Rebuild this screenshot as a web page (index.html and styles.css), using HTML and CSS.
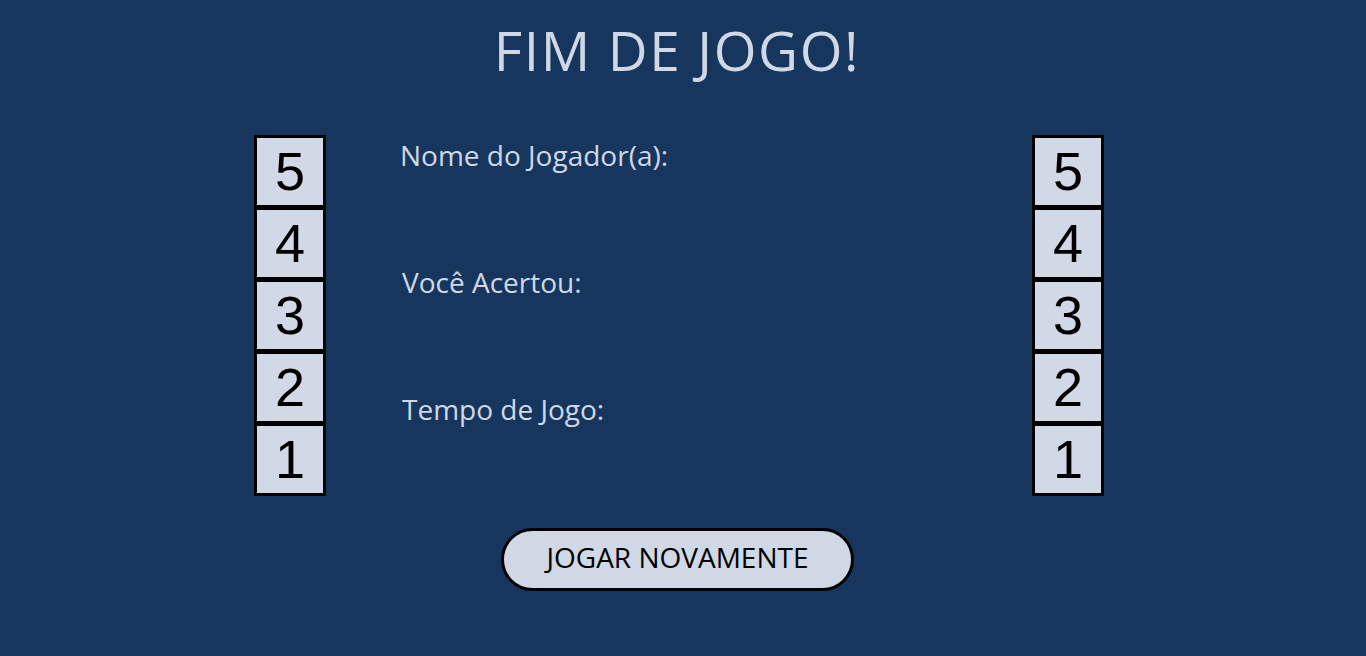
FILE: index.html
```html
<!DOCTYPE html>
<html lang="pt">
<head>
<meta charset="utf-8">
<title>Fim de Jogo</title>
<link rel="stylesheet" href="styles.css">
</head>
<body>
<div class="page">
  <h1 class="title">FIM DE JOGO!</h1>
  <div class="main">
    <div class="stack">
      <div class="box">5</div>
      <div class="box">4</div>
      <div class="box">3</div>
      <div class="box">2</div>
      <div class="box">1</div>
    </div>
    <div class="info">
      <p class="label label-first">Nome do Jogador(a):</p>
      <p class="label">Você Acertou:</p>
      <p class="label">Tempo de Jogo:</p>
    </div>
    <div class="stack stack-right">
      <div class="box">5</div>
      <div class="box">4</div>
      <div class="box">3</div>
      <div class="box">2</div>
      <div class="box">1</div>
    </div>
  </div>
  <div class="actions">
    <button class="btn">JOGAR NOVAMENTE</button>
  </div>
</div>
</body>
</html>
```
FILE: styles.css
```css
html, body {
  margin: 0;
  padding: 0;
  background: #17365d;
}
body {
  font-family: "Open Sans", "Liberation Sans", sans-serif;
  color: #d0d8e6;
  height: 656px;
  overflow: hidden;
}
.page {
  width: 1366px;
}
.title {
  margin: 0;
  padding-top: 17px;
  padding-right: 12px;
  text-align: center;
  font-weight: 400;
  font-size: 55px;
  line-height: 66px;
  letter-spacing: 1.6px;
}
.main {
  display: flex;
  margin-top: 52px;
  padding-left: 254px;
  padding-right: 262px;
}
.stack {
  display: flex;
  flex-direction: column;
  width: 72px;
}
.stack-right {
  margin-left: auto;
}
.box {
  box-sizing: border-box;
  height: 73px;
  margin-top: -1px;
  border: 3px solid #000;
  background: #d1d9e6;
  color: #000;
  font-family: "Liberation Sans", Arial, sans-serif;
  font-size: 54px;
  line-height: 66px;
  text-align: center;
}
.box:first-child {
  margin-top: 0;
}
.info {
  margin-left: 74px;
  display: flex;
  flex-direction: column;
}
.label {
  margin: 0;
  font-size: 28px;
  line-height: 36px;
  padding-top: 91px;
  padding-left: 2px;
}
.label-first {
  padding-top: 2px;
  padding-left: 0;
}
.actions {
  display: flex;
  padding-left: 501px;
  margin-top: 32px;
}
.btn {
  box-sizing: border-box;
  width: 353px;
  height: 63px;
  border: 3px solid #000;
  border-radius: 32px;
  background: #d0d8e6;
  color: #000;
  font-family: "Open Sans", "Liberation Sans", sans-serif;
  font-size: 28px;
  padding: 0 0 5px 0;
  cursor: pointer;
}
```
